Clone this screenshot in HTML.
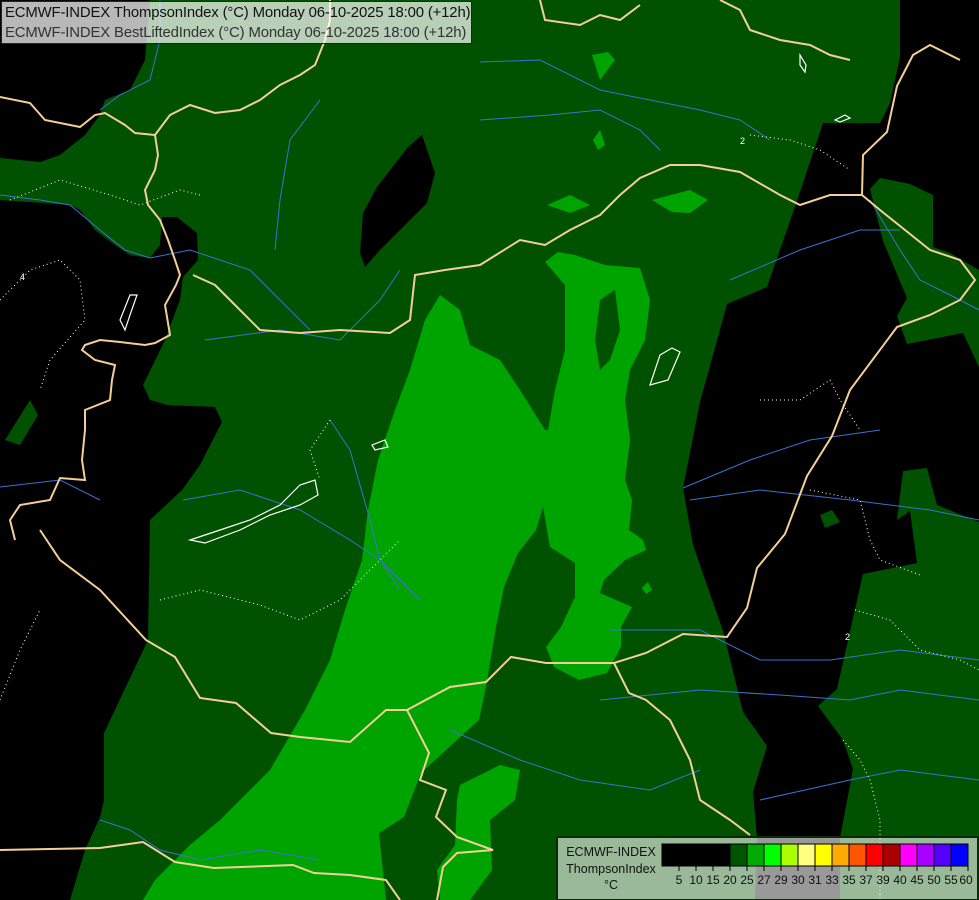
<!DOCTYPE html>
<html><head><meta charset="utf-8"><style>
html,body{margin:0;padding:0;background:#000;}
#w{position:relative;width:979px;height:900px;overflow:hidden;font-family:"Liberation Sans",sans-serif;}
svg{position:absolute;left:0;top:0}
.hdr{position:absolute;left:1px;top:1px;width:469px;height:41px;background:rgba(255,255,255,0.72);border:1px solid #222;}
.hdr div{position:absolute;left:3px;font-size:14.9px;color:#111;white-space:nowrap;letter-spacing:-0.15px}
.leg{position:absolute;left:556px;top:836px;width:419px;height:61px;background:rgba(255,255,255,0.6);border:2px solid #0a2a0a;}
.lt{position:absolute;font-size:12.5px;color:#111;text-align:center;width:100px;left:3px}
</style></head><body><div id="w">
<svg width="979" height="900" viewBox="0 0 979 900">
<rect width="979" height="900" fill="#005200"/>
<polygon fill="#000" points="0,0 150,0 145,60 130,90 105,100 100,115 85,135 60,155 40,162 0,158"/>
<polygon fill="#000" points="0,200 30,202 70,205 80,210 95,230 115,245 130,255 150,258 160,245 162,217 177,217 197,233 198,260 183,277 180,300 165,340 148,375 143,385 150,400 168,405 215,407 222,422 200,465 182,490 150,520 148,640 104,733 104,800 100,817 85,850 70,900 0,900"/>
<polygon fill="#005200" points="5,440 30,400 38,415 20,445"/>
<polygon fill="#000" points="422,135 435,173 427,203 380,250 365,267 360,253 363,213 377,187 408,147"/>
<polygon fill="#000" points="900,0 900,57 890,103 880,123 823,123 797,201 767,287 727,304 700,402 683,488 693,545 723,631 743,712 767,746 753,792 757,838 755,900 840,900 840,838 853,769 843,740 818,706 837,689 863,574 917,563 910,511 897,520 903,471 927,468 937,505 979,522 979,367 963,333 907,344 897,316 907,298 883,241 870,189 880,178 910,184 933,195 933,247 950,253 979,270 979,0"/>
<polygon fill="#005200" points="820,515 832,510 840,522 825,528"/>
<polygon fill="#00a400" points="440,295 460,310 470,345 500,360 520,390 545,430 548,430 555,390 565,350 565,285 545,262 558,252 575,255 605,265 640,268 650,300 645,340 630,370 625,400 630,440 625,480 632,500 629,530 643,540 646,550 625,560 604,580 600,593 632,607 621,627 621,647 607,673 579,680 554,667 546,647 561,627 575,597 575,563 550,547 543,507 536,530 518,553 504,587 496,627 486,687 479,720 457,740 421,773 404,817 379,833 386,900 143,900 155,880 190,845 220,820 270,770 305,710 330,660 345,610 362,560 368,510 378,460 395,410 410,370 425,320"/>
<polygon fill="#005200" points="600,300 615,290 620,330 610,360 600,370 595,340"/>
<polygon fill="#00a400" points="460,785 500,765 520,770 515,800 490,820 492,870 470,900 440,900 437,870 455,845 457,800"/>
<polygon fill="#00a400" points="547,205 570,195 590,205 570,213"/>
<polygon fill="#00a400" points="652,200 690,190 708,200 690,213 672,212"/>
<polygon fill="#00a400" points="592,55 608,52 615,60 600,80"/>
<polygon fill="#00a400" points="593,140 600,130 605,145 598,150"/>
<polygon fill="#00a400" points="642,588 648,582 652,590 646,594"/>
<g fill="none" stroke="#3d70d0" stroke-width="1">
<path d="M0,195 L40,200 70,205 100,230 125,250 150,258 190,250 220,260 250,270 280,300 310,330"/>
<path d="M160,0 L160,40 150,80 120,95 100,110"/>
<path d="M480,62 L540,60 600,90 650,100 700,110 740,120 770,140"/>
<path d="M480,120 L550,115 600,110 640,130 660,150"/>
<path d="M275,250 L280,200 290,140 320,100"/>
<path d="M205,340 L280,330 340,340 380,300 400,270"/>
<path d="M183,500 L240,490 300,510 350,540 380,560 420,600"/>
<path d="M0,487 L60,480 100,500"/>
<path d="M330,420 L350,450 370,520 380,560 400,590"/>
<path d="M730,280 L800,250 860,230 900,230"/>
<path d="M683,488 L750,460 810,440 880,430"/>
<path d="M690,500 L760,490 850,500 930,510 979,520"/>
<path d="M610,630 L700,630 760,660 830,660 900,650 979,660"/>
<path d="M600,700 L700,690 780,695 850,700 900,690 979,700"/>
<path d="M760,800 L850,780 900,770 979,780"/>
<path d="M100,820 L130,830 160,850 200,860 260,850 320,860"/>
<path d="M450,730 L520,760 580,780 650,790 700,770"/>
<path d="M870,200 L900,250 920,280 960,300 979,310"/>
</g>
<g fill="none" stroke="#f3cf98" stroke-width="2">
<path d="M0,97 L30,103 45,120 80,127 95,115 105,113 125,125 135,133 155,135 158,155 155,170 145,190 148,205 160,220 168,240 175,260 180,275 176,285 165,305 170,335 155,343 145,345 120,342 100,340 85,345 82,350 95,360 115,365 112,380 110,400 85,410 85,430 82,460 85,480 60,478 50,500 20,505 10,520 15,540"/>
<path d="M155,135 L170,115 190,105 215,113 240,110 260,100 280,85 300,75 315,65 325,40 330,20 330,0"/>
<path d="M193,275 L215,285 240,310 260,330 300,333 340,330 390,333 410,320 415,275 445,270 480,265 520,240 545,245 570,230 600,215 620,195 640,178 670,165 700,165 740,172 780,195 800,205 830,195 862,195 863,155 887,132 897,86 913,55 930,45 960,60"/>
<path d="M862,195 L880,210 905,230 930,250 960,260 975,280 960,300 930,315 897,327 850,390 832,436 807,476 785,534 757,568 747,608 727,637 683,634 646,653 614,663 546,663 511,657 486,682 450,687 407,710 386,710 350,742 300,737 271,733 236,703 200,698 175,657 146,640 100,590 60,560 40,530"/>
<path d="M407,710 L429,753 420,780 446,790 436,817 457,837 493,850 457,853 443,867 437,900"/>
<path d="M0,850 L100,848 143,842 175,862 214,868 293,865 314,873 350,875 386,880 400,900"/>
<path d="M614,663 L629,693 646,700 670,720 690,760 700,800 730,820 750,835"/>
<path d="M540,0 L545,20 580,25 600,15 620,20 640,5"/>
<path d="M720,0 L740,10 750,30 780,40 810,45 830,55 850,60"/>
</g>
<g fill="none" stroke="#fff" stroke-width="1" stroke-dasharray="1,3">
<path d="M10,200 L60,180 110,195 140,205 180,190 200,195"/>
<path d="M0,300 L30,270 60,260 80,280 85,320 50,360 40,390"/>
<path d="M160,600 L200,590 260,605 300,620 340,600 370,570 400,540"/>
<path d="M330,420 L310,450 320,480"/>
<path d="M0,700 L20,650 40,610"/>
<path d="M760,400 L800,400 830,380 840,400 860,430"/>
<path d="M810,490 L860,500 870,540 880,560 920,575"/>
<path d="M843,740 L860,760 870,780 880,820 880,900"/>
<path d="M855,610 L890,620 920,650 960,660 979,670"/>
<path d="M750,135 L790,140 820,150 850,170"/>
</g>
<g fill="none" stroke="#fff" stroke-width="1.2">
<path d="M190,540 L220,530 250,520 280,505 300,485 315,480 318,495 300,505 270,515 240,530 205,543 Z"/>
<path d="M372,445 L385,440 388,447 375,450 Z"/>
<path d="M120,320 L130,295 137,295 130,315 125,330 Z"/>
<path d="M800,55 L806,65 805,72 800,65 Z"/>
<path d="M835,120 L845,115 850,118 840,122 Z"/>
<path d="M660,355 L672,348 680,352 668,380 650,385 Z"/>
</g>
<g fill="#fff" font-size="9" font-family="Liberation Sans">
<text x="740" y="144">2</text><text x="845" y="640">2</text><text x="20" y="280">4</text>
</g>
</svg>
<div class="hdr"><div style="top:3px">ECMWF-INDEX ThompsonIndex (°C) Monday 06-10-2025 18:00 (+12h)</div><div style="top:23px;color:#333">ECMWF-INDEX BestLiftedIndex (°C) Monday 06-10-2025 18:00 (+12h)</div></div>
<div class="leg">
<div class="lt" style="top:7px">ECMWF-INDEX</div>
<div class="lt" style="top:24px">ThompsonIndex</div>
<div class="lt" style="top:40px">°C</div>
<svg width="419" height="61" style="position:absolute;left:-2px;top:-2px">
<g stroke="#000" stroke-width="1">
<rect x="106" y="8" width="17" height="22" fill="#000"/><rect x="123" y="8" width="17" height="22" fill="#000"/><rect x="140" y="8" width="17" height="22" fill="#000"/><rect x="157" y="8" width="17" height="22" fill="#000"/>
<rect x="174" y="8" width="17" height="22" fill="#005500"/><rect x="191" y="8" width="17" height="22" fill="#00aa00"/><rect x="208" y="8" width="17" height="22" fill="#00ff00"/><rect x="225" y="8" width="17" height="22" fill="#aaff00"/>
<rect x="242" y="8" width="17" height="22" fill="#ffff80"/><rect x="259" y="8" width="17" height="22" fill="#ffff00"/><rect x="276" y="8" width="17" height="22" fill="#ffaa00"/><rect x="293" y="8" width="17" height="22" fill="#ff5500"/>
<rect x="310" y="8" width="17" height="22" fill="#ff0000"/><rect x="327" y="8" width="17" height="22" fill="#aa0000"/><rect x="344" y="8" width="17" height="22" fill="#ff00ff"/><rect x="361" y="8" width="17" height="22" fill="#aa00ff"/>
<rect x="378" y="8" width="17" height="22" fill="#5500ff"/><rect x="395" y="8" width="17" height="22" fill="#0000ff"/>
<path d="M123,30v5M140,30v5M157,30v5M174,30v5M191,30v5M208,30v5M225,30v5M242,30v5M259,30v5M276,30v5M293,30v5M310,30v5M327,30v5M344,30v5M361,30v5M378,30v5M395,30v5M412,30v5"/>
</g>
<g font-size="12" font-family="Liberation Sans" fill="#111" text-anchor="middle">
<text x="123" y="48">5</text><text x="140" y="48">10</text><text x="157" y="48">15</text><text x="174" y="48">20</text><text x="191" y="48">25</text><text x="208" y="48">27</text><text x="225" y="48">29</text><text x="242" y="48">30</text><text x="259" y="48">31</text><text x="276" y="48">33</text><text x="293" y="48">35</text><text x="310" y="48">37</text><text x="327" y="48">39</text><text x="344" y="48">40</text><text x="361" y="48">45</text><text x="378" y="48">50</text><text x="395" y="48">55</text><text x="410" y="48">60</text>
</g>
</svg>
</div>
</div></body></html>
